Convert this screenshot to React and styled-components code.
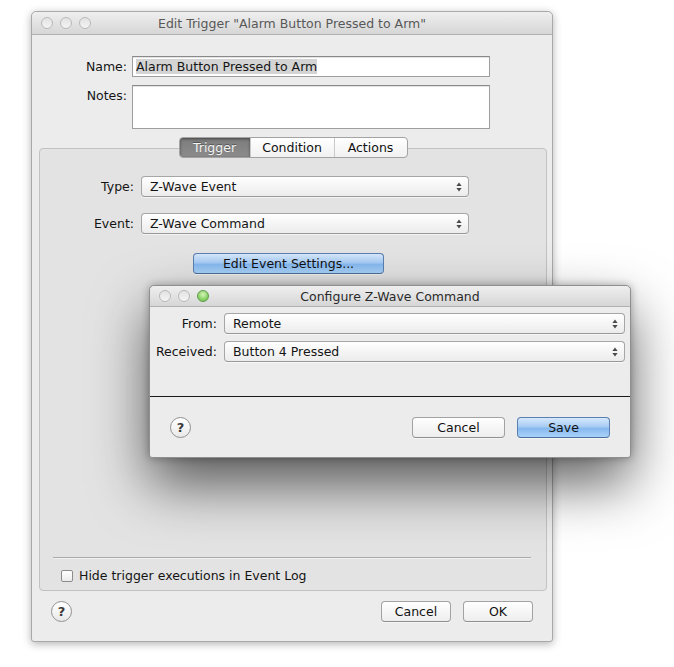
import React from "react";
import styled, { createGlobalStyle } from "styled-components";

const GlobalStyle = createGlobalStyle`
  html, body {
    margin: 0;
    padding: 0;
    background: #ffffff;
  }
  body {
    font-family: "DejaVu Sans", "Liberation Sans", sans-serif;
    font-size: 12.5px;
    color: #141414;
  }
`;

const Desktop = styled.div`
  position: relative;
  width: 674px;
  height: 667px;
  padding: 11px 0 0 31px;
  box-sizing: border-box;
  overflow: hidden;
`;

const Window = styled.div`
  display: flex;
  flex-direction: column;
  box-sizing: border-box;
  width: ${(p) => p.$width}px;
  height: ${(p) => p.$height}px;
  background: #ececec;
  border: 1px solid ${(p) => (p.$active ? "#8f8f8f" : "#a9a9a9")};
  border-radius: 5px 5px 3px 3px;
  box-shadow: ${(p) =>
    p.$active
      ? "0 26px 56px rgba(0, 0, 0, 0.62), 0 0 8px rgba(0, 0, 0, 0.3)"
      : "0 2px 9px rgba(0, 0, 0, 0.3)"};
`;

// floating sheet sits over the trigger editor
const FloatingWindow = styled(Window)`
  position: absolute;
  left: 149px;
  top: 285px;
`;

const TitleBar = styled.div`
  position: relative;
  display: flex;
  align-items: center;
  flex: none;
  height: ${(p) => p.$height}px;
  padding-left: 9px;
  border-radius: 5px 5px 0 0;
  background: linear-gradient(#efefef, #d6d6d6);
  border-bottom: 1px solid #b1b1b1;
`;

const Lights = styled.div`
  display: flex;
  gap: 7px;
`;

const Light = styled.span`
  width: 10px;
  height: 10px;
  border-radius: 50%;
  border: 1px solid ${(p) => (p.$green ? "#5f9b4b" : "#b9b9b9")};
  background: ${(p) =>
    p.$green
      ? "radial-gradient(circle at 50% 35%, #d6f5b6, #7ecb5b 70%)"
      : "linear-gradient(#e2e2e2, #f4f4f4)"};
`;

const Title = styled.div`
  position: absolute;
  left: 0;
  right: 0;
  text-align: center;
  color: ${(p) => (p.$dim ? "#585858" : "#2a2a2a")};
  pointer-events: none;
`;

const Body = styled.div`
  display: flex;
  flex-direction: column;
  flex: 1;
  padding: ${(p) => p.$pad};
`;

const FormGrid = styled.div`
  display: grid;
  grid-template-columns: ${(p) => p.$label}px ${(p) => p.$field}px;
  column-gap: ${(p) => p.$gap}px;
  row-gap: ${(p) => p.$rowGap}px;
  align-items: center;
  margin-left: ${(p) => p.$left}px;
`;

const Label = styled.label`
  text-align: right;
  align-self: ${(p) => (p.$top ? "start" : "center")};
  padding-top: ${(p) => (p.$top ? "3px" : "0")};
  white-space: nowrap;
`;

const TextField = styled.div`
  box-sizing: border-box;
  height: ${(p) => p.$height}px;
  padding: 2px 3px;
  background: #ffffff;
  border: 1px solid #9e9e9e;
  border-top-color: #8a8a8a;
  box-shadow: inset 0 1px 0 #e4e4e4;
  line-height: 15px;
`;

const Selected = styled.span`
  background: #d4d4d4;
`;

const PopupBox = styled.div`
  display: flex;
  align-items: center;
  justify-content: space-between;
  box-sizing: border-box;
  height: 21px;
  padding: 0 6px 0 8px;
  border: 1px solid #a6a6a6;
  border-bottom-color: #989898;
  border-radius: 4px;
  background: linear-gradient(#ffffff, #f5f5f5 50%, #ececec);
  box-shadow: 0 1px 0 rgba(255, 255, 255, 0.6);
`;

const Arrows = () => (
  <svg width="6" height="10" viewBox="0 0 6 10">
    <path d="M3 0.5 L5.6 4 H0.4 Z" fill="#4a4a4a" />
    <path d="M3 9.5 L5.6 6 H0.4 Z" fill="#4a4a4a" />
  </svg>
);

const Popup = ({ value }) => (
  <PopupBox>
    <span>{value}</span>
    <Arrows />
  </PopupBox>
);

const TabBox = styled.div`
  display: flex;
  flex-direction: column;
  flex: 1;
  margin: 19px 5px 0 7px;
  background: #e3e3e3;
  border: 1px solid #c2c2c2;
  border-radius: 4px;
`;

const Segmented = styled.div`
  display: flex;
  align-self: center;
  height: 21px;
  margin-top: -12px;
  border: 1px solid #a3a3a3;
  border-radius: 4px;
  background: linear-gradient(#ffffff, #f1f1f1);
  overflow: hidden;
  box-sizing: border-box;
`;

const Segment = styled.div`
  display: flex;
  align-items: center;
  justify-content: center;
  width: ${(p) => p.$width}px;
  color: ${(p) => (p.$on ? "#f4f4f4" : "#111111")};
  background: ${(p) =>
    p.$on ? "linear-gradient(#7c7c7c, #8c8c8c)" : "transparent"};
  box-shadow: ${(p) => (p.$on ? "inset 0 1px 3px rgba(0,0,0,0.45)" : "none")};
  text-shadow: ${(p) => (p.$on ? "0 -1px 0 rgba(0,0,0,0.35)" : "none")};
  & + & {
    border-left: 1px solid #c9c9c9;
  }
`;

const PushButton = styled.div`
  display: flex;
  align-items: center;
  justify-content: center;
  box-sizing: border-box;
  width: ${(p) => p.$width}px;
  height: 21px;
  margin-left: ${(p) => p.$left || 0}px;
  margin-top: ${(p) => p.$top || 0}px;
  border-radius: 4px;
  border: 1px solid ${(p) => (p.$default ? "#5a7fb0" : "#a2a2a2")};
  border-bottom-color: ${(p) => (p.$default ? "#4c6e9c" : "#8f8f8f")};
  color: #111111;
  background: ${(p) =>
    p.$default
      ? "linear-gradient(#d6e8fb, #a8cdf5 45%, #86b9f0 55%, #a9d2f8)"
      : "linear-gradient(#ffffff, #f6f6f6 50%, #eeeeee)"};
  box-shadow: 0 1px 0 rgba(255, 255, 255, 0.5);
`;

const Spacer = styled.div`
  flex: 1;
`;

const Separator = styled.div`
  height: 1px;
  margin: ${(p) => p.$margin};
  background: ${(p) => p.$color};
  box-shadow: ${(p) => (p.$etched ? "0 1px 0 #f3f3f3" : "none")};
`;

const CheckRow = styled.div`
  display: flex;
  align-items: center;
  gap: 6px;
  margin: 10px 0 7px 21px;
`;

const Checkbox = styled.span`
  box-sizing: border-box;
  width: 12px;
  height: 12px;
  border: 1px solid #8c8c8c;
  border-radius: 2px;
  background: linear-gradient(#ffffff, #ececec);
`;

const ButtonBar = styled.div`
  display: flex;
  align-items: center;
  gap: 12px;
  padding: ${(p) => p.$pad};
`;

const HelpButton = styled.div`
  display: flex;
  align-items: center;
  justify-content: center;
  box-sizing: border-box;
  width: 21px;
  height: 21px;
  border-radius: 50%;
  border: 1px solid #919191;
  background: linear-gradient(#ffffff, #e9e9e9);
  font-size: 13px;
  font-weight: bold;
  color: #3a3a3a;
`;

export default function App() {
  return (
    <>
      <GlobalStyle />
      <Desktop>
        <Window $width={522} $height={631}>
          <TitleBar $height={22}>
            <Lights>
              <Light />
              <Light />
              <Light />
            </Lights>
            <Title $dim>Edit Trigger "Alarm Button Pressed to Arm"</Title>
          </TitleBar>
          <Body $pad="21px 0 0 0">
            <FormGrid $label={55} $field={358} $gap={5} $rowGap={8} $left={40}>
              <Label>Name:</Label>
              <TextField $height={21}>
                <Selected>Alarm Button Pressed to Arm</Selected>
              </TextField>
              <Label $top>Notes:</Label>
              <TextField $height={44} />
            </FormGrid>

            <TabBox>
              <Segmented>
                <Segment $on $width={70}>
                  Trigger
                </Segment>
                <Segment $width={83}>Condition</Segment>
                <Segment $width={72}>Actions</Segment>
              </Segmented>

              <Body $pad="18px 0 0 0">
                <FormGrid $label={94} $field={328} $gap={7} $rowGap={16} $left={0}>
                  <Label>Type:</Label>
                  <Popup value="Z-Wave Event" />
                  <Label>Event:</Label>
                  <Popup value="Z-Wave Command" />
                </FormGrid>
                <PushButton $default $width={191} $left={153} $top={19}>
                  Edit Event Settings...
                </PushButton>
                <Spacer />
                <Separator $margin="0 15px 0 13px" $color="#a9a9a9" $etched />
                <CheckRow>
                  <Checkbox />
                  <span>Hide trigger executions in Event Log</span>
                </CheckRow>
              </Body>
            </TabBox>

            <ButtonBar $pad="10px 19px 19px 19px">
              <HelpButton>?</HelpButton>
              <Spacer />
              <PushButton $width={70}>Cancel</PushButton>
              <PushButton $width={70}>OK</PushButton>
            </ButtonBar>
          </Body>
        </Window>

        <FloatingWindow $active $width={482} $height={173}>
          <TitleBar $height={20}>
            <Lights>
              <Light />
              <Light />
              <Light $green />
            </Lights>
            <Title>Configure Z-Wave Command</Title>
          </TitleBar>
          <Body $pad="6px 0 0 0">
            <FormGrid $label={67} $field={401} $gap={7} $rowGap={7} $left={0}>
              <Label>From:</Label>
              <Popup value="Remote" />
              <Label>Received:</Label>
              <Popup value="Button 4 Pressed" />
            </FormGrid>
            <Spacer />
            <Separator $margin="0" $color="#1a1a1a" />
            <ButtonBar $pad="20px 20px 19px 20px">
              <HelpButton>?</HelpButton>
              <Spacer />
              <PushButton $width={93}>Cancel</PushButton>
              <PushButton $default $width={93}>
                Save
              </PushButton>
            </ButtonBar>
          </Body>
        </FloatingWindow>
      </Desktop>
    </>
  );
}
